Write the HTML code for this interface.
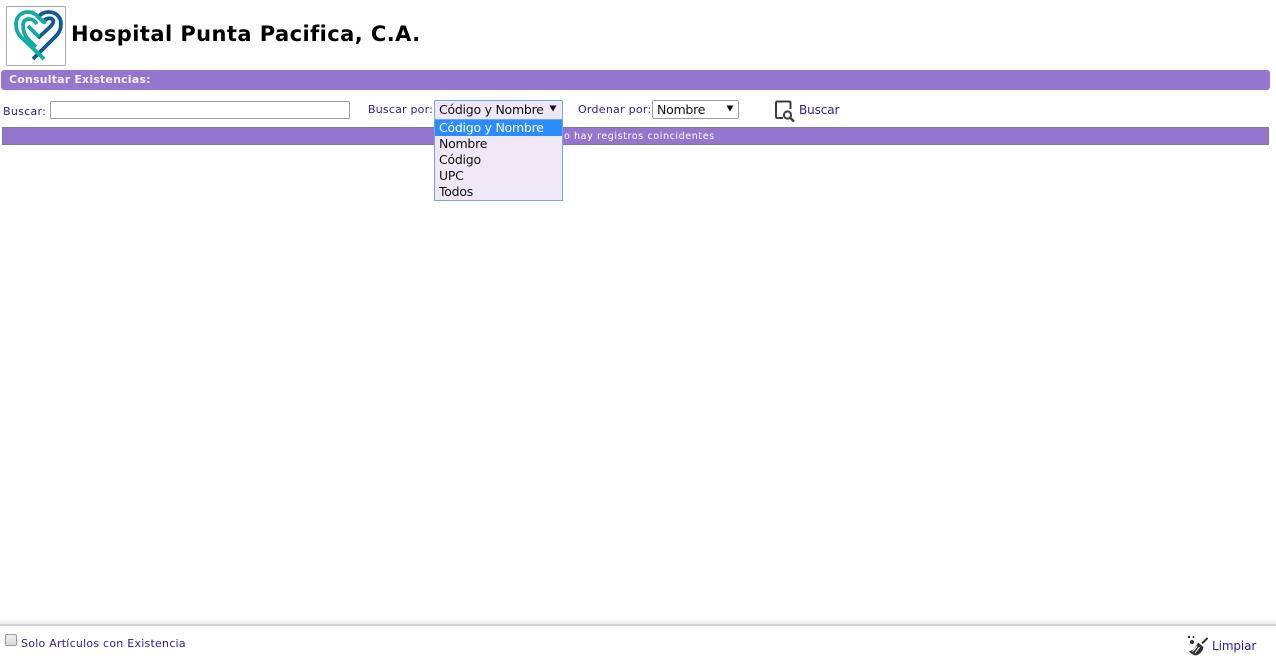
<!DOCTYPE html>
<html lang="es">
<head>
<meta charset="utf-8">
<title>Consultar Existencias</title>
<style>
html,body{margin:0;padding:0;background:#fff;}
body{width:1276px;height:665px;position:relative;overflow:hidden;font-family:"DejaVu Sans",Verdana,sans-serif;}
.a{position:absolute;white-space:nowrap;box-sizing:border-box;}
.lbl{font-size:11px;color:#2f1a9c;line-height:14px;}
.opt{width:127px;height:16px;line-height:16px;padding-left:4px;font-size:12.5px;color:#111;position:absolute;left:0;box-sizing:border-box;letter-spacing:-.25px;}
</style>
</head>
<body>
<div class="a" style="left:6px;top:6px;width:60px;height:60px;border:1px solid #a9a9a9;border-radius:2px;background:#fff;"></div>
<svg class="a" style="left:0;top:0;" width="80" height="70" viewBox="0 0 80 70" fill="none">
  <g stroke="#0f5b93" stroke-width="3.8" stroke-linejoin="round">
    <path d="M33,59 L56,36 C60,32 61,28 61,24 C61,16 55,12 49,12 C44,12 40,14 38,18"/>
    <path d="M38,38 L50,27 C53,24 54,22 53,20 C51,17 45,18 42,23"/>
  </g>
  <g stroke="#12aba6" stroke-width="3.8" stroke-linejoin="round">
    <path d="M44,59 L21,37 C17,33 16,28 16,24 C16,16 22,12 28,12 C33,12 36,14 39,18 L46,23"/>
    <path d="M36,47 L28,39 C24,35 23,30 23,25 C23,21 26,19 29,19 C32,19 35,21 37,24 M28,26 L39,37"/>
  </g>
</svg>
<div class="a" style="left:71px;top:19px;font-size:21px;line-height:30px;font-weight:bold;color:#000;letter-spacing:.43px;">Hospital Punta Pacifica, C.A.</div>

<div class="a" style="left:1px;top:70px;width:1269px;height:20px;background:#9575cd;border-radius:3px;"></div>
<div class="a" style="left:9px;top:73px;font-size:11px;line-height:14px;font-weight:bold;color:#f4f0fb;letter-spacing:.18px;">Consultar Existencias:</div>

<div class="a lbl" style="left:3px;top:105px;letter-spacing:.3px;">Buscar:</div>
<div class="a" style="left:50px;top:101px;width:300px;height:18px;border:1px solid #a0a0a0;border-radius:2px;background:#fff;"></div>
<div class="a lbl" style="left:368px;top:103px;letter-spacing:.2px;">Buscar por:</div>

<div class="a" style="left:434px;top:100px;width:129px;height:20px;border:1px solid #7aa3e0;border-radius:2px;background:#ede7f6;font-size:12.5px;line-height:18px;padding-left:4px;color:#111;letter-spacing:-.25px;">Código y Nombre</div>
<svg class="a" style="left:549px;top:105px;" width="8" height="7"><path d="M0.5 0.5H7.5L4 6.5Z" fill="#111"/></svg>

<div class="a lbl" style="left:578px;top:103px;letter-spacing:.27px;">Ordenar por:</div>
<div class="a" style="left:652px;top:100px;width:87px;height:19px;border:1px solid #a0a0a0;border-radius:2px;background:#fff;font-size:12.5px;line-height:17px;padding-left:4px;color:#111;letter-spacing:-.25px;">Nombre</div>
<svg class="a" style="left:726px;top:105px;" width="8" height="7"><path d="M0.5 0.5H7.5L4 6.5Z" fill="#111"/></svg>

<svg class="a" style="left:774px;top:100px;" width="22" height="23" viewBox="0 0 22 23" fill="none" stroke="#3d3d3d" stroke-width="2">
  <path d="M9 18H3.5C2.4 18 2 17.5 2 16.5V3C2 2 2.4 1.500 3.500 1.500H15C16 1.500 16.500 2 16.500 3V9"/>
  <circle cx="13.500" cy="15" r="3.600"/>
  <path d="M16.200 17.800L20 21.500" stroke-width="2.400"/>
</svg>
<div class="a" style="left:799px;top:103px;font-size:12px;line-height:15px;color:#2f1a9c;letter-spacing:-.1px;">Buscar</div>

<div class="a" style="left:2px;top:127px;width:1267px;height:18px;background:#9575cd;border:1px solid #7f7f7f;"></div>
<div class="a" style="left:564px;top:129px;font-size:9.500px;line-height:15px;color:#fff;letter-spacing:.61px;">o hay registros coincidentes</div>

<div class="a" style="left:434px;top:119px;width:129px;height:82px;border:1px solid #7aa3e0;background:#ede7f6;">
  <div class="opt" style="top:0;background:#2a8cff;color:#fff;">Código y Nombre</div>
  <div class="opt" style="top:16px;">Nombre</div>
  <div class="opt" style="top:32px;">Código</div>
  <div class="opt" style="top:48px;">UPC</div>
  <div class="opt" style="top:64px;">Todos</div>
</div>

<div class="a" style="left:0;top:618px;width:1276px;height:6px;background:linear-gradient(#fff,#ececec);"></div>
<div class="a" style="left:0;top:624px;width:1276px;height:2px;background:#d4d4d4;"></div>
<div class="a" style="left:5px;top:634px;width:12px;height:12px;border:1px solid #9a9a9a;border-radius:2px;background:linear-gradient(#f0f0f0,#d9d9d9);"></div>
<div class="a lbl" style="left:21px;top:637px;letter-spacing:.24px;">Solo Artículos con Existencia</div>

<svg class="a" style="left:1187px;top:634px;" width="24" height="22" viewBox="0 0 24 22" fill="#333">
  <circle cx="2" cy="3" r="1.200"/><circle cx="6.500" cy="3" r="1"/><circle cx="5" cy="8" r="2"/>
  <path d="M20.500 4L15 9.500" stroke="#333" stroke-width="2" fill="none"/>
  <path d="M11 8.500L16.500 13C16 17 13 20.500 9 21.500C6.500 21 3.500 19.500 2 17C6 17 9 13 11 8.500Z" fill="#333"/>
  <path d="M8 19L12.500 13M5.500 17.500L10 12.500" stroke="#fff" stroke-width="1" fill="none"/>
</svg>
<div class="a" style="left:1212px;top:639px;font-size:12px;line-height:15px;color:#2f1a9c;letter-spacing:-.1px;">Limpiar</div>
</body>
</html>
